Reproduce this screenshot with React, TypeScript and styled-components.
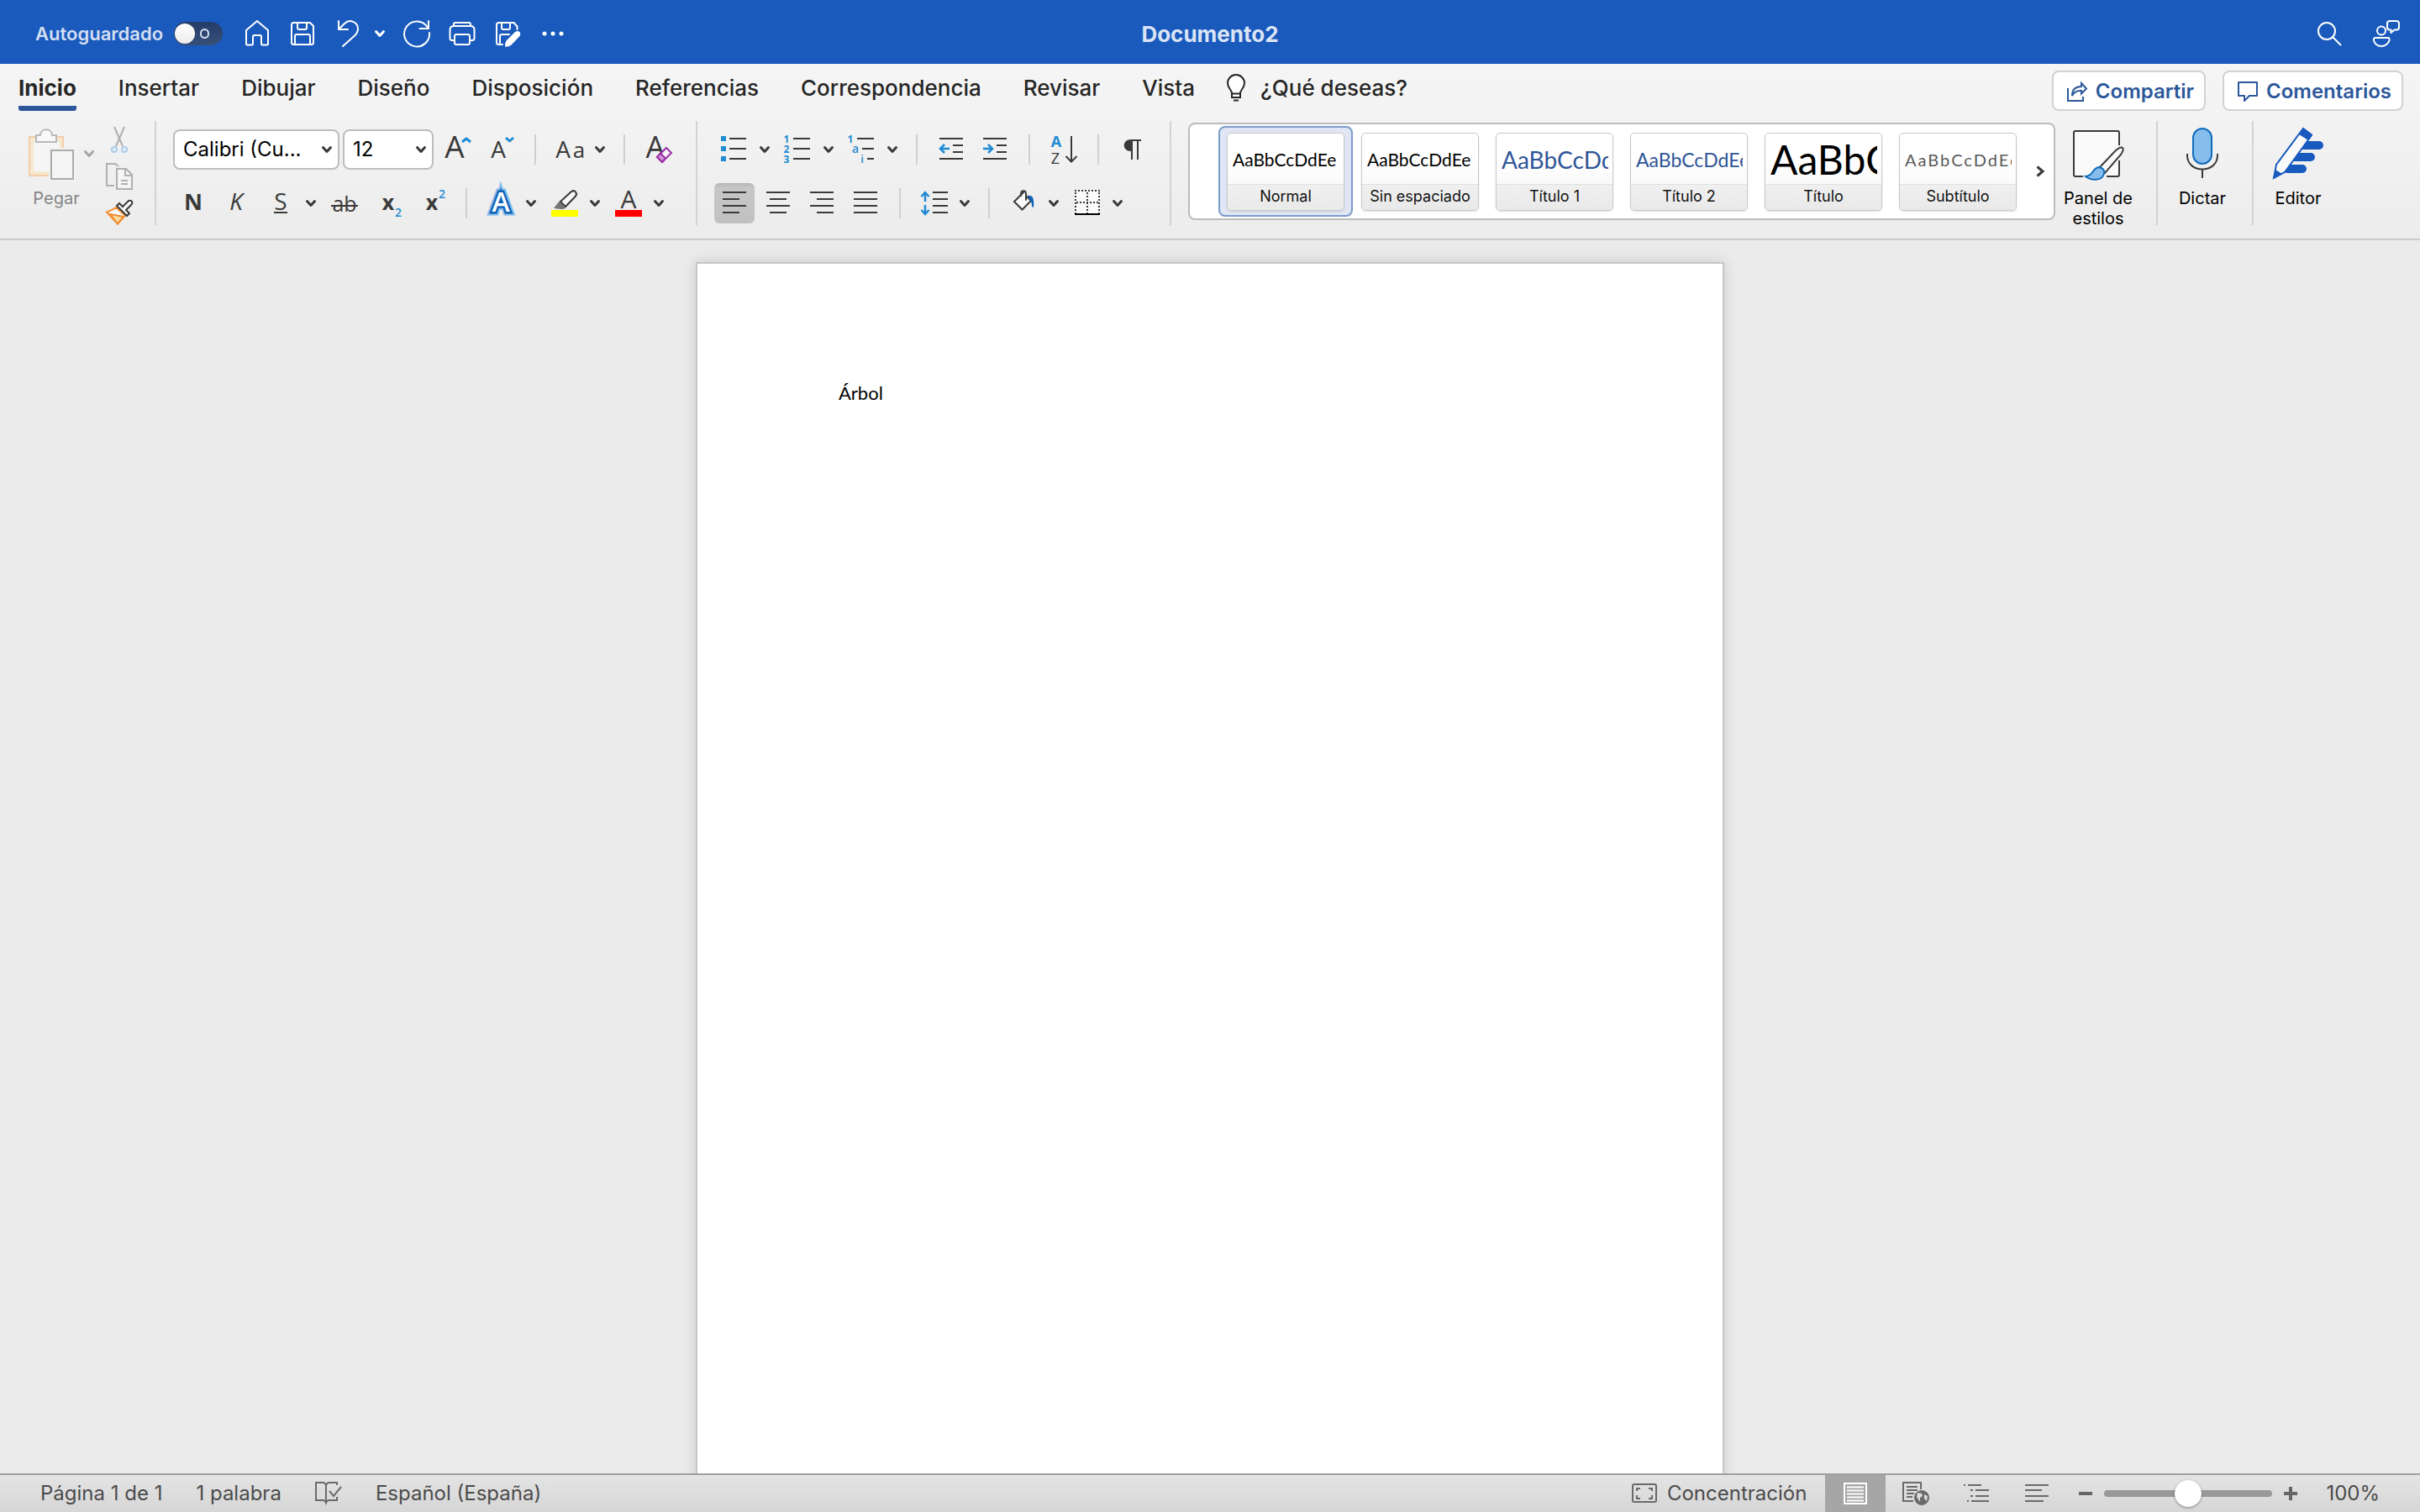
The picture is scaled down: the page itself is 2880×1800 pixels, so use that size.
import React from "react";
import styled, { createGlobalStyle, css } from "styled-components";

const ui = `Inter, "Liberation Sans", sans-serif`;
const body = `Lato, "Open Sans", sans-serif`;
const glyph = `"Open Sans", "Noto Sans", sans-serif`;
const ink = "#3a3a3a";
const sky = "#1f8bd3";

const GlobalStyle = createGlobalStyle`
  *, *::before, *::after { box-sizing: border-box; }
  body { margin: 0; font-family: ${ui}; background: #ebebeb; }
  button, input, select { font: inherit; color: inherit; margin: 0; }
  button { padding: 0; border: 0; background: none; cursor: pointer; }
  svg { display: block; flex: none; overflow: visible; }
`;

const Window = styled.div`
  display: flex;
  flex-direction: column;
  height: 100vh;
  overflow: hidden;
`;

/* ---------- Title bar ---------- */

const TitleBar = styled.header`
  display: grid;
  grid-template-columns: 1fr auto 1fr;
  align-items: center;
  flex: none;
  height: 76px;
  padding: 4px 24px 0;
  background: #1a5abd;
  color: #fff;
`;

const QuickAccess = styled.div`
  display: flex;
  align-items: center;
  gap: 22px;
  padding-left: 18px;
`;

const AutoSave = styled.label`
  display: flex;
  align-items: center;
  gap: 13px;
  margin-right: 3px;
  color: #d3dff2;
  font-size: 22px;
  font-weight: 600;
  line-height: 28px;
`;

const Switch = styled.input`
  appearance: none;
  display: flex;
  align-items: center;
  justify-content: space-between;
  width: 58px;
  height: 28px;
  padding: 0 16px 0 1px;
  border-radius: 14px;
  background: linear-gradient(#243c68, #375078);
  &::before {
    content: "";
    width: 24px;
    height: 24px;
    border-radius: 12px;
    background: linear-gradient(#fff, #ececec);
  }
  &::after {
    content: "";
    width: 11px;
    height: 12px;
    border: 2px solid #d3dff2;
    border-radius: 6px;
  }
`;

const BarButton = styled.button`
  display: flex;
  width: 32px;
  height: 32px;
  color: #fff;
`;

const DocTitle = styled.h1`
  margin: 0;
  padding-top: 2px;
  color: #dbe5f5;
  font-size: 26px;
  font-weight: 700;
  line-height: 32px;
`;

const BarEnd = styled.div`
  display: flex;
  justify-content: flex-end;
  gap: 36px;
`;

/* ---------- Tabs ---------- */

const Chrome = styled.div`
  flex: none;
  background: linear-gradient(#f5f5f5, #f2f2f2 40%, #ececec);
  border-bottom: 2px solid #c9c9c9;
`;

const TabBar = styled.nav`
  display: flex;
  align-items: center;
  height: 64px;
  padding: 0 20px 0 22px;
`;

const TabList = styled.div`
  display: flex;
  flex: 1;
  align-items: flex-start;
  gap: 50px;
  height: 48px;
`;

const Tab = styled.button<{ $on?: boolean }>`
  display: flex;
  align-items: center;
  height: 48px;
  color: #262626;
  font-size: 26px;
  font-weight: ${(p) => (p.$on ? 700 : 500)};
  line-height: 42px;
  white-space: nowrap;
  border-bottom: 6px solid ${(p) => (p.$on ? "#2b579a" : "transparent")};
  border-radius: 3px;
`;

const TellMe = styled(Tab)`
  gap: 18px;
  margin-left: -12px;
`;

const TabActions = styled.div`
  display: flex;
  gap: 20px;
`;

const ActionButton = styled.button`
  display: flex;
  align-items: center;
  gap: 10px;
  height: 48px;
  padding: 2px 12px 0 16px;
  border: 2px solid #d2d2d2;
  border-radius: 8px;
  background: #fff;
  color: #2b579a;
  font-size: 24px;
  font-weight: 600;
  line-height: 32px;
`;

/* ---------- Ribbon ---------- */

const Ribbon = styled.div`
  display: flex;
  padding: 4px 0 16px;
`;

const Group = styled.section<{ $w?: number; $start?: number; $last?: boolean }>`
  display: flex;
  flex: none;
  width: ${(p) => (p.$w ? `${p.$w}px` : "auto")};
  height: 124px;
  padding: 10px 0 0 ${(p) => p.$start ?? 0}px;
  border-right: ${(p) => (p.$last ? "0" : "2px solid #d3d3d3")};
`;

const Rows = styled.div`
  display: flex;
  flex-direction: column;
  gap: 16px;
`;

const Row = styled.div<{ $start?: number }>`
  display: flex;
  align-items: center;
  gap: 16px;
  height: 48px;
  padding-left: ${(p) => p.$start ?? 0}px;
`;

const Tool = styled.button<{ $on?: boolean }>`
  display: flex;
  align-items: center;
  justify-content: center;
  width: 36px;
  height: 48px;
  color: ${ink};
  ${(p) =>
    p.$on &&
    css`
      width: 48px;
      margin: 0 -6px;
      border-radius: 6px;
      background: linear-gradient(#b6b6b6, #c6c6c6 12%, #c1c1c1);
    `}
`;

const SplitBox = styled.div<{ $gap?: number }>`
  display: flex;
  align-items: center;
  gap: ${(p) => p.$gap ?? 12}px;
`;

const ArrowButton = styled.button<{ $faint?: boolean }>`
  display: flex;
  align-items: center;
  width: 12px;
  height: 32px;
  opacity: ${(p) => (p.$faint ? 0.4 : 1)};
`;

const Rule = styled.span`
  width: 2px;
  height: 36px;
  margin: 0 6px;
  background: #d0d0d0;
`;

const Selects = styled.div`
  display: flex;
  gap: 4px;
  margin-right: -6px;
`;

const SelectBox = styled.label<{ $w: number }>`
  display: grid;
  align-items: center;
  width: ${(p) => p.$w}px;
  height: 48px;
  > * { grid-area: 1 / 1; }
  > svg { justify-self: end; margin-right: 9px; pointer-events: none; }
`;

const Select = styled.select`
  appearance: none;
  width: 100%;
  height: 48px;
  padding: 0 30px 0 10px;
  border: 2px solid #bdbdbd;
  border-radius: 8px;
  background: #fff;
  color: #000;
  font-size: 24px;
  line-height: 32px;
`;

const BigTool = styled.button<{ $faint?: boolean; $w: number }>`
  display: flex;
  flex-direction: column;
  align-items: center;
  gap: 8px;
  width: ${(p) => p.$w}px;
  color: ${(p) => (p.$faint ? "#858585" : "#000")};
  font-size: 20px;
  line-height: 24px;
`;

const Paste = styled.div`
  display: flex;
  align-items: flex-start;
  > :last-child { margin-top: 13px; }
`;

const ClipTools = styled.div`
  display: flex;
  flex-direction: column;
  gap: 12px;
  margin: -4px 0 0 14px;
`;

const SmallTool = styled.button`
  display: flex;
  width: 32px;
  height: 32px;
`;

/* ---------- Style gallery ---------- */

const Gallery = styled.div`
  display: flex;
  flex: none;
  height: 116px;
  margin: 2px 0 0 20px;
  padding: 2px 0 2px 34px;
  border: 2px solid #bcbcbc;
  border-radius: 8px;
  background: #fff;
`;

const StyleButton = styled.button<{ $on?: boolean }>`
  width: 160px;
  height: 108px;
  padding: 6px 8px;
  border: 2px solid ${(p) => (p.$on ? "#7b9bcb" : "transparent")};
  border-radius: 8px;
  background: ${(p) => (p.$on ? "#e0e6f3" : "none")};
`;

const StyleCard = styled.span`
  display: flex;
  flex-direction: column;
  height: 93px;
  border: 1px solid #c9c9c9;
  border-radius: 5px;
  overflow: hidden;
  background: linear-gradient(#fff 30%, #f5f5f5);
  box-shadow: 0 1px 2px rgba(0, 0, 0, 0.12);
`;

type SampleProps = { $size: number; $tone: string; $spaced?: boolean };
const Sample = styled.span<SampleProps>`
  flex: 1;
  margin: 0 5px 0 6px;
  overflow: hidden;
  color: ${(p) => p.$tone};
  font-family: ${body};
  font-size: ${(p) => p.$size}px;
  letter-spacing: ${(p) => (p.$spaced ? "2px" : "normal")};
  line-height: 62px;
  text-align: left;
  white-space: nowrap;
`;

const StyleName = styled.span`
  height: 31px;
  border-top: 1px solid #e0e0e0;
  background: linear-gradient(#f0f0f0, #e9e9e9);
  color: #111;
  font-size: 18px;
  line-height: 28px;
  white-space: nowrap;
`;

const MoreStyles = styled.button`
  display: flex;
  align-items: center;
  justify-content: center;
  width: 34px;
  padding-left: 2px;
`;

/* ---------- Document ---------- */

const Canvas = styled.main`
  display: flex;
  flex: 1;
  justify-content: center;
  align-items: flex-start;
  min-height: 0;
  padding: 26px 24px;
  overflow: hidden;
  background: #ebebeb;
`;

const Page = styled.article`
  flex: none;
  width: 1224px;
  max-width: 100%;
  min-height: 1584px;
  padding: 138px 168px;
  border: 2px solid #c5c5c5;
  background: #fff;
  box-shadow: 0 0 16px rgba(0, 0, 0, 0.14);
  color: #000;
  font-family: ${body};
  font-size: 22px;
  line-height: 32px;
  outline: none;
  p { margin: 0; }
`;

/* ---------- Status bar ---------- */

const StatusBar = styled.footer`
  display: flex;
  align-items: center;
  justify-content: space-between;
  flex: none;
  height: 46px;
  padding: 0 48px;
  border-top: 2px solid #a0a0a0;
  background: linear-gradient(#e4e4e4, #d6d6d6);
  color: #4b4b4b;
  font-size: 24px;
  line-height: 32px;
`;

const StatusSide = styled.div<{ $gap: number }>`
  display: flex;
  align-items: center;
  gap: ${(p) => p.$gap}px;
`;

const StatusButton = styled.button`
  display: flex;
  align-items: center;
  gap: 12px;
  white-space: nowrap;
`;

const Views = styled.div`
  display: flex;
  margin-left: 8px;
`;

const ViewButton = styled.button<{ $on?: boolean }>`
  display: flex;
  align-items: center;
  justify-content: center;
  width: 72px;
  height: 44px;
  background: ${(p) => (p.$on ? "#a6a6a6" : "none")};
`;

const Zoom = styled.input`
  appearance: none;
  width: 200px;
  height: 32px;
  background: none;
  &::-webkit-slider-runnable-track {
    height: 8px;
    border-radius: 4px;
    background: #999;
  }
  &::-webkit-slider-thumb {
    appearance: none;
    width: 32px;
    height: 32px;
    margin-top: -12px;
    border-radius: 16px;
    background: #fff;
    box-shadow: 0 1px 3px rgba(0, 0, 0, 0.4);
  }
`;

const ZoomValue = styled.button`
  margin-left: 20px;
`;

/* ---------- Icons ---------- */

const Line = ({ children, w = 2, size = 32 }: { children: React.ReactNode; w?: number; size?: number }) => (
  <svg width={size} height={size} viewBox="0 0 32 32" fill="none" stroke="currentColor" strokeWidth={w} strokeLinejoin="round" strokeLinecap="round" aria-hidden="true">
    {children}
  </svg>
);

type LetterProps = { x: number; y: number; size: number; weight?: number; fill?: string; italic?: boolean; children: string };
const Letter = ({ x, y, size, weight = 400, fill = ink, italic, children }: LetterProps) => (
  <text x={x} y={y} fontFamily={glyph} fontSize={size} fontWeight={weight} fill={fill} fontStyle={italic ? "italic" : "normal"} textAnchor="middle" stroke="none">
    {children}
  </text>
);

const Chevron = ({ tone = ink }: { tone?: string }) => (
  <svg width="12" height="10" viewBox="0 0 12 10" fill="none" stroke={tone} strokeWidth="3" strokeLinecap="round" strokeLinejoin="round" aria-hidden="true">
    <path d="M1.5 2.5L6 7.5L10.5 2.5" />
  </svg>
);

/* Horizontal strokes, each given as [x1, x2, y]. */
const Bars = ({ rows, w = 2, tone = ink }: { rows: number[][]; w?: number; tone?: string }) => (
  <g stroke={tone} strokeWidth={w} strokeLinecap="butt">
    {rows.map(([a, b, y]) => (
      <path key={`${a}-${y}`} d={`M${a} ${y}H${b}`} />
    ))}
  </g>
);

const HomeIcon = () => (
  <Line>
    <path d="M16 1L3 12v16q0 1.500 1.500 1.500h5q1.500 0 1.500-1.500v-8.500q0-1.500 1.500-1.500h7q1.500 0 1.500 1.500v8.500q0 1.500 1.500 1.500h5q1.500 0 1.500-1.500V12z" />
  </Line>
);
const SaveIcon = () => (
  <Line>
    <path d="M5.500 3H25l4 4v19.500q0 2.500-2.500 2.500h-21Q3 29 3 26.500v-21Q3 3 5.500 3z" />
    <path d="M10 3v6q0 2 2 2h7q2 0 2-2V3M7 29V19q0-2 2-2h14q2 0 2 2v10" />
  </Line>
);
const UndoIcon = () => (
  <Line>
    <path d="M5 1v10h11M5 11l7-7c6-6 16-2 16 6.500 0 4-2 6-4 8L10 31" />
  </Line>
);
const RedoIcon = () => (
  <Line>
    <path d="M30 1v9H19.500M31 15A15 15 0 1 1 28.500 8" />
  </Line>
);
const PrintIcon = () => (
  <Line>
    <path d="M6 7V5q0-2 2-2h16q2 0 2 2v2" />
    <path d="M7 24H4q-2.500 0-2.500-2.500V11.500Q1.500 7 6 7h20q4.500 0 4.500 4.500v10Q30.500 24 28 24h-3" />
    <rect x="7" y="17" width="18" height="12" rx="2" />
  </Line>
);
const SavePenIcon = () => (
  <Line>
    <path d="M27.500 11V7.500L23.500 3h-18Q3 3 3 5.500v21Q3 29 5.500 29H10" />
    <path d="M9 3v6q0 2 2 2h6q2 0 2-2V3M7 29V19q0-2 2-2h9" />
    <path fill="currentColor" stroke="none" d="M13 31.500c0-4 .5-6 2.500-8l9.500-9.500c4-3 8 1 5.500 5L21 29c-2 2-4 2.500-8 2.500z" />
  </Line>
);
const DotsIcon = () => (
  <Line>
    <g fill="currentColor" stroke="none">
      <circle cx="6" cy="16" r="2.500" />
      <circle cx="16" cy="16" r="2.500" />
      <circle cx="26" cy="16" r="2.500" />
    </g>
  </Line>
);
const SearchIcon = () => (
  <Line>
    <circle cx="13" cy="13" r="10" />
    <path d="M20.500 20.500L29.500 29.500" />
  </Line>
);
const PresenceIcon = () => (
  <Line>
    <circle cx="10" cy="12.500" r="5" />
    <path d="M3 21h15q2 0 1.500 3c-1 4-5 7-9.500 7s-8.500-3-9-7Q.5 21 3 21z" />
    <path d="M20 1h8q3 0 3 3v4.500q0 3-3 3h-2.500L21.500 15v-3.500H20q-3 0-3-3V4q0-3 3-3z" />
  </Line>
);
const BulbIcon = () => (
  <svg width="22" height="32" viewBox="0 0 22 32" fill="none" stroke="#262626" strokeWidth="2" aria-hidden="true">
    <path fill="#fff" d="M6 22c0-4-5-6-5-12a10 10 0 0 1 20 0c0 6-5 8-5 12v5H6zM6 22.500h10" />
    <path d="M8 30.500h6" />
  </svg>
);
const ShareIcon = () => (
  <svg width="24" height="24" viewBox="0 0 24 24" fill="none" stroke="currentColor" strokeWidth="2" aria-hidden="true">
    <path d="M1 8v15h18v-5" />
    <path d="M6 17c0-7 4-11 11-11V2l6 6.500-6 6V11c-5-.5-9 2-11 6z" />
  </svg>
);
const CommentIcon = () => (
  <svg width="24" height="24" viewBox="0 0 24 24" fill="none" stroke="currentColor" strokeWidth="2" strokeLinejoin="round" aria-hidden="true">
    <path d="M1 1h22v16H14l-6 6v-6H1z" />
  </svg>
);

const PasteIcon = () => (
  <svg width="66" height="62" viewBox="0 0 66 62" fill="none" strokeWidth="2" aria-hidden="true">
    <path fill="#f6e9cb" stroke="#f3ccae" d="M1 9h40v46H1z" />
    <path fill="#f5f5f5" d="M6 14h31v36H6z" />
    <path fill="#f8f8f8" stroke="#b9b9b9" d="M9 7h5c0-9 14-9 14 0h5v8H9z" />
    <path fill="#f2f2f2" d="M24 22h32v40H24z" />
    <path fill="#f5f5f5" stroke="#ababab" d="M27 25h26v34H27z" />
  </svg>
);
const CutIcon = () => (
  <Line>
    <path stroke="#b0b0b0" strokeLinecap="butt" d="M10 1l10 23M22 1L12 24" />
    <g stroke="#a9cdea">
      <circle cx="10" cy="28" r="3" />
      <circle cx="22" cy="28" r="3" />
    </g>
  </Line>
);
const CopyIcon = () => (
  <Line>
    <g stroke="#b0b0b0" strokeLinejoin="miter" strokeLinecap="butt">
      <path d="M10 27H1V1h10l4 3" />
      <path fill="#f5f5f5" d="M13 7h11l7 7v17H13z" />
      <path d="M23 7v8h8M18 21h8M18 25h8" />
    </g>
  </Line>
);
const BrushIcon = () => (
  <Line>
    <g strokeLinejoin="miter">
      <path fill="#f8f8f8" stroke="#f08c2e" d="M12 9C8 12 5 13 1 14.500L14 28.500l9-10z" />
      <path fill="#fbdc9c" stroke="#f08c2e" d="M5 17l16 3-7 8.500z" />
      <path fill="#f8f8f8" stroke={ink} d="M13 7l3-3 4 4 7-7q3-1 4 1t-1 4l-6 6 4 4-3 3z" />
    </g>
  </Line>
);

const GrowIcon = () => (
  <Line>
    <Letter x={13} y={26} size={37}>A</Letter>
    <path stroke={sky} strokeWidth="3" strokeLinecap="butt" d="M22 7l5-4 5 4" />
  </Line>
);
const ShrinkIcon = () => (
  <Line>
    <Letter x={13} y={26} size={28}>A</Letter>
    <path stroke={sky} strokeWidth="3" strokeLinecap="butt" d="M22 2l4.500 4L31 2" />
  </Line>
);
const CaseIcon = () => (
  <Line>
    <Letter x={8} y={26} size={28}>A</Letter>
    <Letter x={27} y={26} size={26}>a</Letter>
  </Line>
);
const ClearIcon = () => (
  <Line>
    <Letter x={12} y={26} size={36}>A</Letter>
    <g strokeLinejoin="miter" stroke="#9b2fa8">
      <path fill="#f9f4fa" d="M25 14l6 6-11 11-6-6z" />
      <path fill="#cf98d6" d="M18 20.500l6 6-4 4.500-6-6z" />
    </g>
  </Line>
);
const BoldIcon = () => <Line><Letter x={16} y={24} size={27} weight={700}>N</Letter></Line>;
const ItalicIcon = () => <Line><Letter x={15} y={24} size={28} italic>K</Letter></Line>;
const UnderlineIcon = () => (
  <Line>
    <Letter x={16} y={24} size={28}>S</Letter>
    <Bars rows={[[8, 24, 27]]} />
  </Line>
);
const StrikeIcon = () => (
  <Line>
    <Letter x={16} y={26} size={25}>ab</Letter>
    <Bars rows={[[0, 32, 19]]} />
  </Line>
);
const SubIcon = () => (
  <Line>
    <Letter x={16} y={24} size={25} weight={700}>x</Letter>
    <Letter x={28} y={32} size={14} weight={600} fill={sky}>2</Letter>
  </Line>
);
const SupIcon = () => (
  <Line>
    <Letter x={16} y={24} size={25} weight={700}>x</Letter>
    <Letter x={28} y={10} size={14} weight={600} fill={sky}>2</Letter>
  </Line>
);
const EffectsIcon = () => (
  <Line>
    <g fontFamily={glyph} fontSize="32" fontWeight="600" textAnchor="middle" strokeLinejoin="miter">
      <text x="16" y="26" fill="#86bdec" stroke="#86bdec" strokeWidth="9">A</text>
      <text x="16" y="26" fill="#0f63b8" stroke="#0f63b8" strokeWidth="5">A</text>
      <text x="16" y="26" fill="#fff" stroke="none">A</text>
    </g>
  </Line>
);
const HighlightIcon = () => (
  <Line>
    <path fill="#f8f8f8" stroke={ink} d="M11 14L24 2q3-2 5 .5t0 5L17 20z" />
    <path fill="#757575" stroke="none" d="M9.500 13.500l8 8q-3 2-6 1.500L3 22z" />
    <path fill="#ff0" stroke="none" d="M0 24h32v8H0z" />
  </Line>
);
const FontColorIcon = () => (
  <Line>
    <Letter x={16} y={22} size={30}>A</Letter>
    <path fill="#f00" stroke="none" d="M0 24h32v8H0z" />
  </Line>
);

const BulletsIcon = () => (
  <Line>
    <path fill={sky} stroke="none" d="M0 0h6v6H0zM0 12h6v6H0zM0 24h6v6H0z" />
    <Bars rows={[[10, 30, 3], [10, 30, 15], [10, 30, 27]]} />
  </Line>
);
const NumbersIcon = () => (
  <Line>
    <Letter x={2} y={8} size={12} weight={700} fill={sky}>1</Letter>
    <Letter x={2} y={20} size={12} weight={700} fill={sky}>2</Letter>
    <Letter x={2} y={32} size={12} weight={700} fill={sky}>3</Letter>
    <Bars rows={[[10, 30, 3], [10, 30, 15], [10, 30, 27]]} />
  </Line>
);
const LevelsIcon = () => (
  <Line>
    <Letter x={2} y={8} size={12} weight={700} fill={sky}>1</Letter>
    <Letter x={8} y={20} size={14} weight={600} fill={sky}>a</Letter>
    <Letter x={16} y={32} size={13} weight={600} fill={sky}>i</Letter>
    <Bars rows={[[10, 30, 3], [16, 30, 15], [22, 30, 27]]} />
  </Line>
);
const OutdentIcon = () => (
  <Line>
    <Bars rows={[[2, 30, 3], [18, 30, 11], [18, 30, 19], [2, 30, 27]]} />
    <path stroke={sky} strokeLinecap="butt" strokeLinejoin="miter" strokeWidth="2.500" d="M14 15H3M8 10l-5 5 5 5" />
  </Line>
);
const IndentIcon = () => (
  <Line>
    <Bars rows={[[2, 30, 3], [18, 30, 11], [18, 30, 19], [2, 30, 27]]} />
    <path stroke={sky} strokeLinecap="butt" strokeLinejoin="miter" strokeWidth="2.500" d="M2 15h11M8 10l5 5-5 5" />
  </Line>
);
const SortIcon = () => (
  <Line>
    <Letter x={7} y={13} size={18} weight={700} fill={sky}>A</Letter>
    <Letter x={6} y={33} size={18} weight={500}>Z</Letter>
    <path strokeLinecap="butt" strokeLinejoin="miter" d="M25 0v30M18.500 24l6.500 6.500L31.500 24" />
  </Line>
);
const PilcrowIcon = () => (
  <Line>
    <path fill={ink} stroke="none" d="M14 18c-11 0-11-14 0-14h12v2h-3v22h-2V6h-5v22h-2z" />
  </Line>
);
const AlignIcon = ({ from, to }: { from: number; to: number }) => (
  <Line>
    <Bars rows={[[2, 30, 3], [from, to, 11], [2, 30, 19], [from, to, 27]]} />
  </Line>
);
const SpacingIcon = () => (
  <Line>
    <path stroke={sky} strokeWidth="2.500" strokeLinecap="butt" strokeLinejoin="miter" d="M5 14V3M.5 8L5 3l4.500 5M5 18v11M.5 24L5 29l4.500-5" />
    <Bars rows={[[14, 32, 3], [14, 32, 11], [14, 32, 19], [14, 32, 27]]} />
  </Line>
);
const BucketIcon = () => (
  <Line>
    <path fill="#f9f9f9" strokeLinejoin="miter" d="M16 3L5 14l9.500 9.500L25 13l-5-5" />
    <path d="M13 7V5c0-5 6-5 6 0v7" />
    <path fill="#0f62b8" stroke="none" d="M21 7c6-1 8 3 7 14l-2-1c0-4-.5-6-2-7z" />
  </Line>
);
const BordersIcon = () => (
  <Line>
    <path fill="#fafafa" stroke="none" d="M1 1h30v28H1z" />
    <g strokeDasharray="2 2" strokeLinecap="butt" strokeLinejoin="miter">
      <path d="M1 1h30M2 3v25M30 3v25M16 3v25M3 15h28" />
    </g>
    <Bars rows={[[1, 31, 29]]} tone="#000" />
  </Line>
);

const PanelIcon = () => (
  <svg width="60" height="62" viewBox="0 0 60 62" fill="none" stroke={ink} strokeWidth="2" aria-hidden="true">
    <rect x="1" y="2" width="54" height="54" rx="2" fill="#fafafa" />
    <path stroke="#f3f3f3" strokeWidth="6" d="M12 56h28M55 19v18" />
    <path fill="#fafafa" d="M32 45L51 25q6-5 8-3t-2 8L38 52z" />
    <path fill="#86bdec" stroke="#0f6cbd" d="M15 56c8-1 8-6 11-8.500 5-5 12-1 11 4.500-1 9-14 10-22 4z" />
  </svg>
);
const MicIcon = () => (
  <svg width="40" height="62" viewBox="0 0 40 62" fill="none" strokeWidth="2" aria-hidden="true">
    <rect x="9" y="-1" width="22" height="42" rx="11" fill="#86bdec" stroke="#0f6cbd" />
    <path stroke={ink} d="M2 29v2c0 22 36 22 36 0v-2M20 47v11" />
  </svg>
);
const EditorIcon = () => (
  <svg width="62" height="62" viewBox="0 0 62 62" fill="none" aria-hidden="true">
    <g stroke="#185abd" strokeWidth="10" strokeLinecap="round">
      <path d="M34 19h22M26 33h20M18 47h18" />
    </g>
    <path fill="#fafafa" stroke="#185abd" strokeWidth="2" d="M37 -1l10 8L15 51 2 58l3-16z" />
    <path fill="#185abd" d="M37 -2l11 8-5 7-11-7zM4 48l8 5-11 6z" />
  </svg>
);

const ProofIcon = () => (
  <svg width="32" height="28" viewBox="0 0 32 28" fill="none" stroke="#6a6a6a" strokeWidth="2" aria-hidden="true">
    <path d="M13 4v22M13 4q-1-3-4-3H1v21h8q3 0 4 3 1-3 4-3h9v-4M13 4q1-3 4-3h9v3M17 11l5 6L31 6" />
  </svg>
);
const FocusIcon = () => (
  <svg width="30" height="24" viewBox="0 0 30 24" fill="none" stroke="#6a6a6a" strokeWidth="2" aria-hidden="true">
    <rect x="1" y="1" width="28" height="21" rx="2" />
    <path d="M6 9V6h4M20 6h4v3M24 14v4h-4M10 18H6v-4" />
  </svg>
);
const PrintViewIcon = () => (
  <svg width="28" height="26" viewBox="0 0 28 26" fill="none" stroke="#fff" strokeWidth="2" aria-hidden="true">
    <rect x="1" y="1" width="26" height="24" />
    <path d="M4 5.500h20M4 9.500h20M4 13.500h20M4 17.500h20M4 21.500h20" />
  </svg>
);
const WebViewIcon = () => (
  <svg width="32" height="28" viewBox="0 0 32 28" fill="none" stroke="#6a6a6a" strokeWidth="2" aria-hidden="true">
    <path d="M13 23H1V1h21v8M5 6h13M5 10h13M5 14h9M5 18h7" />
    <circle cx="23" cy="19" r="8" fill="#6a6a6a" />
    <path fill="#dcdcdc" stroke="none" d="M18 13l5 1 1 3-3 2v5l-4-6zM26 15l4 2-1 6-3-3z" />
  </svg>
);
const OutlineViewIcon = () => (
  <svg width="30" height="22" viewBox="0 0 30 22" aria-hidden="true">
    <Bars tone="#6a6a6a" rows={[[0, 2, 1], [5, 21, 1], [8, 11, 7], [14, 30, 7], [8, 11, 14], [14, 30, 14], [4, 6, 20], [9, 30, 20]]} />
  </svg>
);
const DraftViewIcon = () => (
  <svg width="28" height="22" viewBox="0 0 28 22" aria-hidden="true">
    <Bars tone="#6a6a6a" rows={[[0, 28, 1], [0, 20, 7], [0, 28, 14], [0, 22, 20]]} />
  </svg>
);
const StepIcon = ({ plus }: { plus?: boolean }) => (
  <svg width="16" height="16" viewBox="0 0 16 16" stroke="#666" strokeWidth="4" aria-hidden="true">
    <path d={plus ? "M0 8h16M8 0v16" : "M0 8h16"} />
  </svg>
);

/* ---------- Composition ---------- */

const Button = ({ name, on, children }: { name: string; on?: boolean; children: React.ReactNode }) => (
  <Tool type="button" aria-label={name} $on={on}>{children}</Tool>
);
const Split = ({ name, children }: { name: string; children: React.ReactNode }) => (
  <SplitBox>
    <Button name={name}>{children}</Button>
    <ArrowButton type="button" aria-label={`Opciones de ${name}`}><Chevron /></ArrowButton>
  </SplitBox>
);

const tabs = ["Inicio", "Insertar", "Dibujar", "Diseño", "Disposición", "Referencias", "Correspondencia", "Revisar", "Vista"];

const blue = "#2f5597";
const styles = [
  { name: "Normal", size: 21, tone: "#000" },
  { name: "Sin espaciado", size: 21, tone: "#000" },
  { name: "Título 1", size: 28, tone: blue },
  { name: "Título 2", size: 23, tone: blue },
  { name: "Título", size: 48, tone: "#000" },
  { name: "Subtítulo", size: 20, tone: "#5a5a5a", spaced: true },
];

export default function App() {
  return (
    <Window>
      <GlobalStyle />
      <TitleBar>
        <QuickAccess>
          <AutoSave>
            Autoguardado
            <Switch type="checkbox" />
          </AutoSave>
          <BarButton aria-label="Inicio"><HomeIcon /></BarButton>
          <BarButton aria-label="Guardar"><SaveIcon /></BarButton>
          <SplitBox $gap={16}>
            <BarButton aria-label="Deshacer"><UndoIcon /></BarButton>
            <ArrowButton aria-label="Historial"><Chevron tone="#fff" /></ArrowButton>
          </SplitBox>
          <BarButton aria-label="Rehacer"><RedoIcon /></BarButton>
          <BarButton aria-label="Imprimir"><PrintIcon /></BarButton>
          <BarButton aria-label="Guardar como"><SavePenIcon /></BarButton>
          <BarButton aria-label="Más"><DotsIcon /></BarButton>
        </QuickAccess>
        <DocTitle>Documento2</DocTitle>
        <BarEnd>
          <BarButton aria-label="Buscar"><SearchIcon /></BarButton>
          <BarButton aria-label="Presencia"><PresenceIcon /></BarButton>
        </BarEnd>
      </TitleBar>

      <Chrome>
        <TabBar>
          <TabList>
            {tabs.map((t, i) => (
              <Tab key={t} type="button" $on={i === 0}>{t}</Tab>
            ))}
            <TellMe type="button"><BulbIcon />¿Qué deseas?</TellMe>
          </TabList>
          <TabActions>
            <ActionButton type="button"><ShareIcon />Compartir</ActionButton>
            <ActionButton type="button"><CommentIcon />Comentarios</ActionButton>
          </TabActions>
        </TabBar>

        <Ribbon>
          <Group $w={186} $start={34}>
            <Paste>
              <BigTool type="button" $faint $w={66}><PasteIcon />Pegar</BigTool>
              <ArrowButton type="button" $faint aria-label="Opciones de pegado"><Chevron /></ArrowButton>
            </Paste>
            <ClipTools>
              <SmallTool aria-label="Cortar"><CutIcon /></SmallTool>
              <SmallTool aria-label="Copiar"><CopyIcon /></SmallTool>
              <SmallTool aria-label="Copiar formato"><BrushIcon /></SmallTool>
            </ClipTools>
          </Group>

          <Group $w={644} $start={20}>
            <Rows>
              <Row>
                <Selects>
                  <SelectBox $w={198}>
                    <Select aria-label="Fuente"><option>Calibri (Cu...</option></Select>
                    <Chevron />
                  </SelectBox>
                  <SelectBox $w={108}>
                    <Select aria-label="Tamaño"><option>12</option></Select>
                    <Chevron />
                  </SelectBox>
                </Selects>
                <Button name="Aumentar tamaño"><GrowIcon /></Button>
                <Button name="Disminuir tamaño"><ShrinkIcon /></Button>
                <Rule />
                <Split name="Mayúsculas"><CaseIcon /></Split>
                <Rule />
                <Button name="Borrar formato"><ClearIcon /></Button>
              </Row>
              <Row $start={6}>
                <Button name="Negrita"><BoldIcon /></Button>
                <Button name="Cursiva"><ItalicIcon /></Button>
                <Split name="Subrayado"><UnderlineIcon /></Split>
                <Button name="Tachado"><StrikeIcon /></Button>
                <Button name="Subíndice"><SubIcon /></Button>
                <Button name="Superíndice"><SupIcon /></Button>
                <Rule />
                <Split name="Efectos de texto"><EffectsIcon /></Split>
                <Split name="Resaltado"><HighlightIcon /></Split>
                <Split name="Color de fuente"><FontColorIcon /></Split>
              </Row>
            </Rows>
          </Group>

          <Group $w={564} $start={26}>
            <Rows>
              <Row>
                <Split name="Viñetas"><BulletsIcon /></Split>
                <Split name="Numeración"><NumbersIcon /></Split>
                <Split name="Lista multinivel"><LevelsIcon /></Split>
                <Rule />
                <Button name="Disminuir sangría"><OutdentIcon /></Button>
                <Button name="Aumentar sangría"><IndentIcon /></Button>
                <Rule />
                <Button name="Ordenar"><SortIcon /></Button>
                <Rule />
                <Button name="Mostrar marcas"><PilcrowIcon /></Button>
              </Row>
              <Row>
                <Button name="Alinear a la izquierda" on><AlignIcon from={2} to={22} /></Button>
                <Button name="Centrar"><AlignIcon from={6} to={26} /></Button>
                <Button name="Alinear a la derecha"><AlignIcon from={10} to={30} /></Button>
                <Button name="Justificar"><AlignIcon from={2} to={30} /></Button>
                <Rule />
                <Split name="Interlineado"><SpacingIcon /></Split>
                <Rule />
                <Split name="Sombreado"><BucketIcon /></Split>
                <Split name="Bordes"><BordersIcon /></Split>
              </Row>
            </Rows>
          </Group>

          <Gallery>
            {styles.map((s, i) => (
              <StyleButton key={s.name} type="button" $on={i === 0}>
                <StyleCard>
                  <Sample $size={s.size} $tone={s.tone} $spaced={s.spaced}>AaBbCcDdEe</Sample>
                  <StyleName>{s.name}</StyleName>
                </StyleCard>
              </StyleButton>
            ))}
            <MoreStyles type="button" aria-label="Más estilos">
              <svg width="10" height="14" viewBox="0 0 10 14" fill="none" stroke={ink} strokeWidth="3" aria-hidden="true">
                <path d="M1.500 1.500L8 7L1.500 12.500" />
              </svg>
            </MoreStyles>
          </Gallery>

          <Group $w={122} $start={2}>
            <BigTool type="button" $w={98}><PanelIcon />Panel de estilos</BigTool>
          </Group>
          <Group $w={114}>
            <BigTool type="button" $w={106}><MicIcon />Dictar</BigTool>
          </Group>
          <Group $last>
            <BigTool type="button" $w={106}><EditorIcon />Editor</BigTool>
          </Group>
        </Ribbon>
      </Chrome>

      <Canvas>
        <Page contentEditable suppressContentEditableWarning spellCheck={false}>
          <p>Árbol</p>
        </Page>
      </Canvas>

      <StatusBar>
        <StatusSide $gap={40}>
          <StatusButton type="button">Página 1 de 1</StatusButton>
          <StatusButton type="button">1 palabra</StatusButton>
          <StatusButton type="button" aria-label="Revisión"><ProofIcon /></StatusButton>
          <StatusButton type="button">Español (España)</StatusButton>
        </StatusSide>
        <StatusSide $gap={14}>
          <StatusButton type="button"><FocusIcon />Concentración</StatusButton>
          <Views>
            <ViewButton type="button" aria-label="Diseño de impresión" $on><PrintViewIcon /></ViewButton>
            <ViewButton type="button" aria-label="Diseño web"><WebViewIcon /></ViewButton>
            <ViewButton type="button" aria-label="Esquema"><OutlineViewIcon /></ViewButton>
            <ViewButton type="button" aria-label="Borrador"><DraftViewIcon /></ViewButton>
          </Views>
          <StatusButton type="button" aria-label="Alejar"><StepIcon /></StatusButton>
          <Zoom type="range" min="0" max="200" defaultValue="100" aria-label="Zoom" />
          <StatusButton type="button" aria-label="Acercar"><StepIcon plus /></StatusButton>
          <ZoomValue type="button">100%</ZoomValue>
        </StatusSide>
      </StatusBar>
    </Window>
  );
}
